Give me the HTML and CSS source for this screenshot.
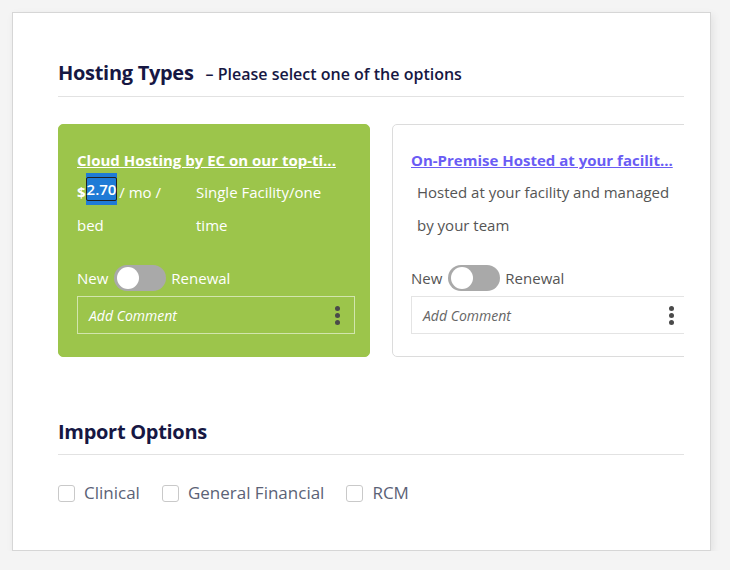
FILE: index.html
```html
<!DOCTYPE html>
<html>
<head>
<meta charset="utf-8">
<link rel="stylesheet" href="styles.css">
</head>
<body>
<div class="panel">
  <div class="section-head">
    <h2 class="section-title">Hosting Types</h2>
    <span class="section-sub">– Please select one of the options</span>
  </div>
  <div class="cards">
    <div class="card card-selected">
      <a class="card-title">Cloud Hosting by EC on our top-ti...</a>
      <div class="price-row">
        <div class="price-col"><b class="dollar">$</b><span class="sel"><span class="sel-box">2.70</span></span> / mo / bed</div>
        <div class="price-note">Single Facility/one time</div>
      </div>
      <div class="toggle-row">
        <span>New</span>
        <span class="switch"><span class="knob"></span></span>
        <span>Renewal</span>
      </div>
      <div class="comment">
        <span class="comment-text">Add Comment</span>
        <span class="kebab"><i></i><i></i><i></i></span>
      </div>
    </div>
    <div class="card">
      <a class="card-title">On-Premise Hosted at your facilit...</a>
      <div class="desc">Hosted at your facility and managed by your team</div>
      <div class="toggle-row">
        <span>New</span>
        <span class="switch"><span class="knob"></span></span>
        <span>Renewal</span>
      </div>
      <div class="comment">
        <span class="comment-text">Add Comment</span>
        <span class="kebab"><i></i><i></i><i></i></span>
      </div>
    </div>
  </div>
  <div class="section-head section-head-2">
    <h2 class="section-title">Import Options</h2>
  </div>
  <div class="checks">
    <label class="check"><span class="box"></span>Clinical</label>
    <label class="check"><span class="box"></span>General Financial</label>
    <label class="check"><span class="box"></span>RCM</label>
  </div>
</div>
</body>
</html>
```
FILE: styles.css
```css
* { box-sizing: border-box; }
html, body { margin: 0; }
body {
  background: #f4f4f4;
  padding: 12px 0 0 12px;
  font-family: "Open Sans", "Liberation Sans", sans-serif;
}
.panel {
  width: 699px;
  height: 539px;
  background: #fff;
  border: 1px solid #d6d6d6;
  box-shadow: 2px 3px 8px rgba(0,0,0,0.08);
  padding: 46px 26px 0 45px;
}
.section-head {
  display: flex;
  align-items: baseline;
  gap: 12px;
  border-bottom: 1px solid #e2e2e2;
  padding-bottom: 9px;
}
.section-title {
  margin: 0;
  font-size: 20px;
  line-height: 28px;
  font-weight: 700;
  color: #161743;
  letter-spacing: -0.3px;
}
.section-sub {
  font-size: 16px;
  font-weight: 600;
  color: #161743;
}
.cards {
  display: flex;
  gap: 22px;
  overflow: hidden;
  margin-top: 27px;
}
.card {
  flex: 0 0 312px;
  width: 312px;
  height: 233px;
  border: 1px solid #dcdcdc;
  border-radius: 5px;
  background: #fff;
  padding: 25px 14px 0 18px;
}
.card-selected {
  background: #9cc54b;
  border-color: #9cc54b;
  color: #fff;
}
.card-title {
  display: block;
  font-size: 15px;
  line-height: 20px;
  font-weight: 700;
  text-decoration: underline;
  color: #6a5cf4;
  white-space: nowrap;
}
.card-selected .card-title { color: #fff; }
.price-row {
  display: flex;
  margin-top: 6px;
  font-size: 15px;
  line-height: 33px;
}
.price-col { width: 119px; padding-right: 18px; }
.price-note { width: 145px; }
.dollar { font-weight: 700; }
.sel {
  display: inline-block;
  background: #1f7bd6;
  line-height: 22px;
  padding: 4px 0;
  vertical-align: middle;
  margin-top: -8px;
  margin-right: -2px;
  position: relative;
  top: -1px;
}
.sel-box {
  display: inline-block;
  border: 1px solid #222;
  border-radius: 2px;
  padding: 0;
  font-weight: 600;
  color: #fff;
}
.desc {
  margin-top: 6px;
  padding: 0 8px 0 6px;
  font-size: 15px;
  line-height: 33px;
  color: #555;
}
.toggle-row {
  display: flex;
  align-items: center;
  gap: 5px;
  margin-top: 23px;
  height: 26px;
  font-size: 15px;
  color: #555;
}
.card-selected .toggle-row { color: #fff; }
.switch {
  width: 52px;
  height: 26px;
  border-radius: 13px;
  background: #a9a9a9;
  padding: 2px 3px;
  display: flex;
  align-items: center;
  margin-left: 1px;
}
.knob {
  width: 22px;
  height: 22px;
  border-radius: 50%;
  background: #fff;
}
.comment {
  margin-top: 5px;
  width: 278px;
  flex-shrink: 0;
  height: 38px;
  border: 1px solid #e4e4e4;
  display: flex;
  align-items: center;
  justify-content: space-between;
  padding: 0 14px 0 11px;
  background: #fff;
}
.card-selected .comment {
  background: transparent;
  border-color: rgba(255,255,255,0.55);
}
.comment-text {
  font-size: 14px;
  font-style: italic;
  color: #666;
}
.card-selected .comment-text { color: #fff; }
.kebab {
  display: flex;
  flex-direction: column;
  gap: 2px;
}
.kebab i {
  display: block;
  width: 5px;
  height: 5px;
  border-radius: 50%;
  background: #4a4a4a;
}
.section-head-2 {
  margin-top: 61px;
  padding-bottom: 8px;
}
.checks {
  display: flex;
  gap: 22px;
  margin-top: 27px;
}
.check {
  display: flex;
  align-items: center;
  gap: 9px;
  font-size: 17px;
  line-height: 22px;
  color: #5b6276;
}
.box {
  width: 17px;
  height: 17px;
  border: 1px solid #c9c9c9;
  border-radius: 3px;
  background: #fff;
}
```
